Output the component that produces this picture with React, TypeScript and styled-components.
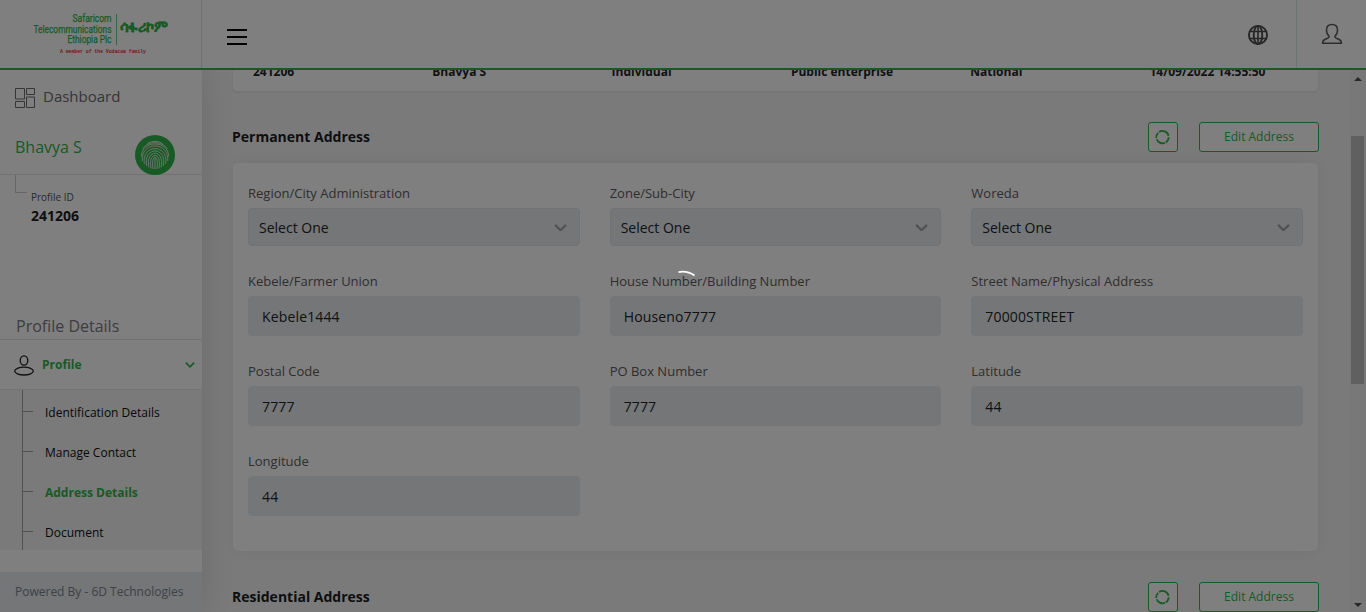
import React from "react";
import styled, { createGlobalStyle } from "styled-components";

const GREEN = "#30b54a";

const GlobalStyle = createGlobalStyle`
  * { box-sizing: border-box; }
  html, body { margin: 0; padding: 0; overflow: hidden; }
  body { font-family: "Open Sans", "Noto Sans", sans-serif; font-size: 14px; color: #212529; background: #f4f4f4; }
`;

const Page = styled.div`
  display: flex;
  flex-direction: column;
  height: 100vh;
  overflow: hidden;
`;

const Header = styled.header`
  flex: none;
  display: flex;
  align-items: stretch;
  height: 70px;
  background: #fff;
  border-bottom: 2px solid ${GREEN};
  position: relative;
  z-index: 2;
`;

const Brand = styled.div`
  width: 202px;
  border-right: 1px solid #d9e6de;
`;

const MenuToggle = styled.button`
  display: flex;
  flex-direction: column;
  gap: 5px;
  width: 20px;
  margin: 29px auto 0 25px;
  padding: 0;
  border: 0;
  background: none;
`;

const MenuBar = styled.span`
  height: 2px;
  background: #000;
`;

const HeaderAction = styled.div<{ $width: number; $divided?: boolean }>`
  width: ${(p) => p.$width}px;
  padding-top: 23px;
  display: flex;
  justify-content: center;
  border-left: ${(p) => (p.$divided ? "1px solid #d9ebe6" : "0")};
`;

const Body = styled.div`
  flex: 1;
  display: flex;
  min-height: 0;
`;

const Sidebar = styled.aside`
  position: relative;
  z-index: 1;
  width: 202px;
  flex: none;
  display: flex;
  flex-direction: column;
  background: #fff;
  box-shadow: 0 0 30px rgba(0, 0, 0, 0.12);
`;

const DashboardLink = styled.a`
  display: flex;
  align-items: center;
  gap: 8px;
  height: 54px;
  padding-left: 15px;
  font-size: 15px;
  color: #6c6c6c;
  & > svg { margin-top: 1px; }
  & > span { margin-top: -2px; }
`;

const UserRow = styled.div`
  display: flex;
  justify-content: space-between;
  height: 51px;
  padding: 11px 27px 0 15px;
  font-size: 16px;
  line-height: 24px;
  color: ${GREEN};
  border-bottom: 1px solid #e4e4e4;
`;

const Fingerprint = styled.div`
  width: 40px;
  height: 40px;
`;

const ProfileId = styled.div`
  display: flex;
  gap: 4px;
  height: 140px;
  padding-left: 15px;
`;

const Elbow = styled.span`
  width: 12px;
  height: 18px;
  border: solid #ccc;
  border-width: 0 0 1px 1px;
`;

const ProfileText = styled.div`
  padding-top: 14px;
  font-size: 10px;
  line-height: 16px;
  color: #555;
`;

const ProfileNumber = styled.div`
  margin-top: 1px;
  font-size: 14px;
  line-height: 20px;
  font-weight: 700;
  color: #212121;
`;

const SidebarTitle = styled.h2`
  margin: 0;
  height: 25px;
  padding-left: 16px;
  font-size: 16px;
  font-weight: 400;
  line-height: 22px;
  color: #7b7b86;
  border-bottom: 1px solid #e4e4e4;
`;

const ProfileToggle = styled.div`
  display: flex;
  align-items: center;
  height: 50px;
  padding: 0 7px 0 14px;
  font-size: 12px;
  font-weight: 700;
  color: ${GREEN};
  border-bottom: 1px solid #e8e8e8;
  & > span { margin: 0 auto 0 8px; }
`;

const Submenu = styled.ul`
  margin: 0;
  padding: 0 0 0 22px;
  list-style: none;
  height: 160px;
  background: #f4f4f4;
`;

const SubmenuItem = styled.li<{ $active?: boolean }>`
  display: flex;
  align-items: center;
  gap: 12px;
  height: 40px;
  padding-top: 5px;
  border-left: 1px solid #a2a2a2;
  font-size: 12px;
  font-weight: ${(p) => (p.$active ? 700 : 400)};
  color: ${(p) => (p.$active ? GREEN : "#111")};
  &::before {
    content: "";
    width: 10px;
    height: 1px;
    margin-top: -2px;
    background: #a2a2a2;
  }
`;

const SidebarFooter = styled.footer`
  margin-top: auto;
  height: 40px;
  padding-left: 15px;
  font-size: 12px;
  line-height: 40px;
  color: #7c828c;
  background: #e9ecef;
`;

const Content = styled.main`
  flex: 1;
  min-width: 0;
  padding: 0 31px;
  overflow: hidden;
`;

const SummaryCard = styled.section`
  display: grid;
  grid-template-columns: repeat(6, 179.3px);
  height: 21px;
  padding-left: 20px;
  overflow: hidden;
  background: #fff;
  border-radius: 0 0 4px 4px;
  box-shadow: 0 1px 3px rgba(0, 0, 0, 0.08);
  font-size: 12px;
  font-weight: 700;
  line-height: 16px;
  & > span { margin-top: -6px; }
`;

const SectionHeader = styled.div`
  display: flex;
  align-items: center;
  height: 30px;
  margin: 31px -1px 11px -1px;
`;

const SectionTitle = styled.h3`
  margin: -2px auto 0 0;
  font-size: 14px;
  font-weight: 700;
  color: #1c1c1c;
`;

const OutlineButton = styled.button<{ $width: number }>`
  display: flex;
  align-items: center;
  justify-content: center;
  width: ${(p) => p.$width}px;
  height: 30px;
  padding: 0;
  font: 400 12px "Open Sans", sans-serif;
  color: ${GREEN};
  background: #fff;
  border: 1px solid ${GREEN};
  border-radius: 3px;
  & + & { margin-left: 21px; }
  & > span { margin-top: -1px; }
`;

const FormCard = styled.section`
  display: grid;
  grid-template-columns: repeat(3, 1fr);
  column-gap: 30px;
  row-gap: 25px;
  align-content: start;
  height: 388px;
  padding: 20px 15px 0;
  background: #fff;
  border-radius: 5px;
  box-shadow: 0 0 14px rgba(0, 0, 0, 0.06);
`;

const FieldLabel = styled.label`
  display: block;
  height: 20px;
  margin-bottom: 5px;
  font-size: 13px;
  line-height: 20px;
  color: #5c5c5c;
`;

const FieldBox = styled.div<{ $select?: boolean }>`
  display: flex;
  align-items: center;
  justify-content: space-between;
  height: ${(p) => (p.$select ? 38 : 40)}px;
  padding: 1px ${(p) => (p.$select ? "12px 0 10px" : "14px 0 13px")};
  font-size: 14px;
  letter-spacing: ${(p) => (p.$select ? "0" : "0.15px")};
  background: #e9ecef;
  border: 1px solid ${(p) => (p.$select ? "#e2e5e9" : "#e9ecef")};
  border-radius: 4px;
`;

const Scrollbar = styled.div`
  flex: none;
  width: 17px;
  display: flex;
  flex-direction: column;
  align-items: center;
  justify-content: space-between;
  padding: 6px 0 5px;
  background: #f1f1f1;
`;

const Thumb = styled.div`
  width: 13px;
  height: 248px;
  margin: 55px 0 auto;
  background: #c1c1c1;
`;

const Arrow = styled.span<{ $down?: boolean }>`
  border: 4px solid transparent;
  border-top: ${(p) => (p.$down ? "4px solid #505050" : "0")};
  border-bottom: ${(p) => (p.$down ? "0" : "4px solid #505050")};
  margin-top: ${(p) => (p.$down ? 0 : 1)}px;
`;

const Overlay = styled.div`
  position: fixed;
  inset: 0;
  z-index: 10;
  background: rgba(0, 0, 0, 0.5);
`;

const Spinner = styled.svg`
  position: absolute;
  left: 663px;
  top: 270px;
`;

const Logo = () => (
  <svg width="201" height="68" viewBox="0 0 201 68">
    <g fill={GREEN} stroke={GREEN} strokeWidth="0.25" fontFamily="Roboto, sans-serif" fontSize="11.4" textAnchor="end">
      <text x="111.5" y="22.2" textLength="39" lengthAdjust="spacingAndGlyphs">Safaricom</text>
      <text x="111.5" y="32.7" textLength="78" lengthAdjust="spacingAndGlyphs">Telecommunications</text>
      <text x="111.5" y="43.2" textLength="44" lengthAdjust="spacingAndGlyphs">Ethiopia Plc</text>
    </g>
    <path d="M116.5 14V45" stroke={GREEN} strokeWidth="0.7" />
    <g transform="translate(120 31.8) scale(1 1.12)">
      <text fill={GREEN} stroke={GREEN} strokeWidth="0.2" fontSize="13" fontWeight="700" textLength="48" lengthAdjust="spacingAndGlyphs">ሳፋሪኮም</text>
    </g>
    <text x="60" y="53" fill="#e0303a" fontFamily="Liberation Mono, monospace" fontWeight="700" fontSize="5.4" textLength="86" lengthAdjust="spacingAndGlyphs">A member of the Vodacom family</text>
  </svg>
);

const GlobeIcon = () => (
  <svg width="22" height="24" viewBox="0 0 22 24" fill="none" stroke="#4c4c4c" strokeWidth="1.9">
    <circle cx="11" cy="12" r="9.1" />
    <ellipse cx="11" cy="12" rx="4.3" ry="9.1" />
    <path d="M11 2.7v18.6M2.8 8.5h16.4M2.8 15.5h16.4" strokeWidth="1.6" />
  </svg>
);

const AccountIcon = () => (
  <svg width="22" height="22" viewBox="0 0 22 22" fill="none" stroke="#5c5c5c" strokeWidth="1.5" strokeLinejoin="round">
    <path d="M11 1.6c-3.5 0-5.5 2.3-5.5 5.6 0 2.7 1 4.8 2.6 6v.9c-.3.9-1.4 1.2-3.2 1.9-2.1.8-3.4 1.4-3.4 4.2h19c0-2.8-1.3-3.4-3.4-4.2-1.8-.7-2.9-1-3.2-1.9v-.9c1.6-1.2 2.6-3.3 2.6-6 0-3.3-2-5.6-5.5-5.6z" />
  </svg>
);

const DashboardIcon = () => (
  <svg width="20" height="20" viewBox="0 0 20 20" fill="none" stroke="#6c6c6c">
    <path d="M.5.5h9v10.500h-9zM11.5.5h8v6h-8zM.5 13.5h9v6h-9zM11.5 9h8v10.500h-8z" />
  </svg>
);

const FingerprintIcon = () => (
  <svg width="40" height="40" viewBox="0 0 40 40" fill="none">
    <circle cx="20" cy="20" r="20" fill={GREEN} />
    <g stroke="#dcecdf" strokeWidth="0.95" strokeLinecap="round">
      <path d="M12.5 8.7C17 5.5 23 5.5 27.5 8.7" />
      <path d="M8 13.5C13 5.6 27 5.6 32 13.5" />
      <path d="M6.3 21C6.500 4.800 33.500 4.800 33.700 21" />
      <path d="M7.300 25.500C5.500 6 34.500 6 32.700 25.500" />
      <path d="M9.300 28.500C6 8.500 34 8.500 30.700 28.500" />
      <path d="M11.600 30.500C7.800 11 32.200 11 28.400 30.500" />
      <path d="M13.800 32C10 13.500 30 13.500 26.200 32" />
      <path d="M16 33C12.500 16 27.500 16 24 33" />
      <path d="M18 33.600C15.300 18.500 24.700 18.500 22 33.600" />
      <path d="M20 22.500V33.800" />
    </g>
  </svg>
);

const ProfileIcon = () => (
  <svg width="20" height="22" viewBox="0 0 20 22" fill="none" stroke="#222" strokeWidth="1.3">
    <ellipse cx="10" cy="6.5" rx="3.8" ry="4.6" />
    <ellipse cx="10" cy="17.1" rx="9.3" ry="3.9" />
  </svg>
);

const Chevron = ({ size, color, weight }: { size: number; color: string; weight: number }) => (
  <svg width={size} height={size * 0.6} viewBox="0 0 12 7.2" fill="none" stroke={color} strokeWidth={weight}>
    <path d="M1 .8l5 5 5-5" />
  </svg>
);

const RefreshIcon = () => (
  <svg width="16" height="16" viewBox="0 0 16 16" fill="none" stroke={GREEN} strokeWidth="1.8">
    <path d="M4 3.100A6.200 6.200 0 0 1 13.600 6.800M13.700 8.300A6.200 6.200 0 0 1 10.800 13.400M10 13.800A6.200 6.200 0 0 1 1.700 10.300M1.300 9A6.200 6.200 0 0 1 3.200 3.800" />
  </svg>
);

const summary = ["241206", "Bhavya S", "Individual", "Public enterprise", "National", "14/09/2022 14:55:50"];

const menu = ["Identification Details", "Manage Contact", "Address Details", "Document"];

const fields = [
  { label: "Region/City Administration", value: "Select One", select: true },
  { label: "Zone/Sub-City", value: "Select One", select: true },
  { label: "Woreda", value: "Select One", select: true },
  { label: "Kebele/Farmer Union", value: "Kebele1444" },
  { label: "House Number/Building Number", value: "Houseno7777" },
  { label: "Street Name/Physical Address", value: "70000STREET" },
  { label: "Postal Code", value: "7777" },
  { label: "PO Box Number", value: "7777" },
  { label: "Latitude", value: "44" },
  { label: "Longitude", value: "44" },
];

const AddressHeader = ({ title }: { title: string }) => (
  <SectionHeader>
    <SectionTitle>{title}</SectionTitle>
    <OutlineButton $width={30} aria-label="Refresh"><RefreshIcon /></OutlineButton>
    <OutlineButton $width={120}><span>Edit Address</span></OutlineButton>
  </SectionHeader>
);

export default function App() {
  return (
    <Page>
      <GlobalStyle />
      <Header>
        <Brand><Logo /></Brand>
        <MenuToggle aria-label="Toggle menu"><MenuBar /><MenuBar /><MenuBar /></MenuToggle>
        <HeaderAction $width={76}><GlobeIcon /></HeaderAction>
        <HeaderAction $width={70} $divided><AccountIcon /></HeaderAction>
      </Header>
      <Body>
        <Sidebar>
          <DashboardLink><DashboardIcon /><span>Dashboard</span></DashboardLink>
          <UserRow>Bhavya S<Fingerprint><FingerprintIcon /></Fingerprint></UserRow>
          <ProfileId>
            <Elbow />
            <ProfileText>Profile ID<ProfileNumber>241206</ProfileNumber></ProfileText>
          </ProfileId>
          <SidebarTitle>Profile Details</SidebarTitle>
          <ProfileToggle>
            <ProfileIcon /><span>Profile</span><Chevron size={10} color={GREEN} weight={2} />
          </ProfileToggle>
          <Submenu>
            {menu.map((item) => (
              <SubmenuItem key={item} $active={item === "Address Details"}>{item}</SubmenuItem>
            ))}
          </Submenu>
          <SidebarFooter>Powered By - 6D Technologies</SidebarFooter>
        </Sidebar>
        <Content>
          <SummaryCard>{summary.map((text) => <span key={text}>{text}</span>)}</SummaryCard>
          <AddressHeader title="Permanent Address" />
          <FormCard>
            {fields.map((field) => (
              <div key={field.label}>
                <FieldLabel>{field.label}</FieldLabel>
                <FieldBox $select={field.select}>
                  {field.value}
                  {field.select && <Chevron size={13} color="#a0a3a6" weight={2} />}
                </FieldBox>
              </div>
            ))}
          </FormCard>
          <AddressHeader title="Residential Address" />
        </Content>
        <Scrollbar><Arrow /><Thumb /><Arrow $down /></Scrollbar>
      </Body>
      <Overlay>
        <Spinner width="40" height="40" viewBox="0 0 40 40" fill="none">
          <path d="M15.500 2.100C21 1 26.500 2 31.500 5.500" stroke="#fff" strokeWidth="1.800" />
        </Spinner>
      </Overlay>
    </Page>
  );
}
